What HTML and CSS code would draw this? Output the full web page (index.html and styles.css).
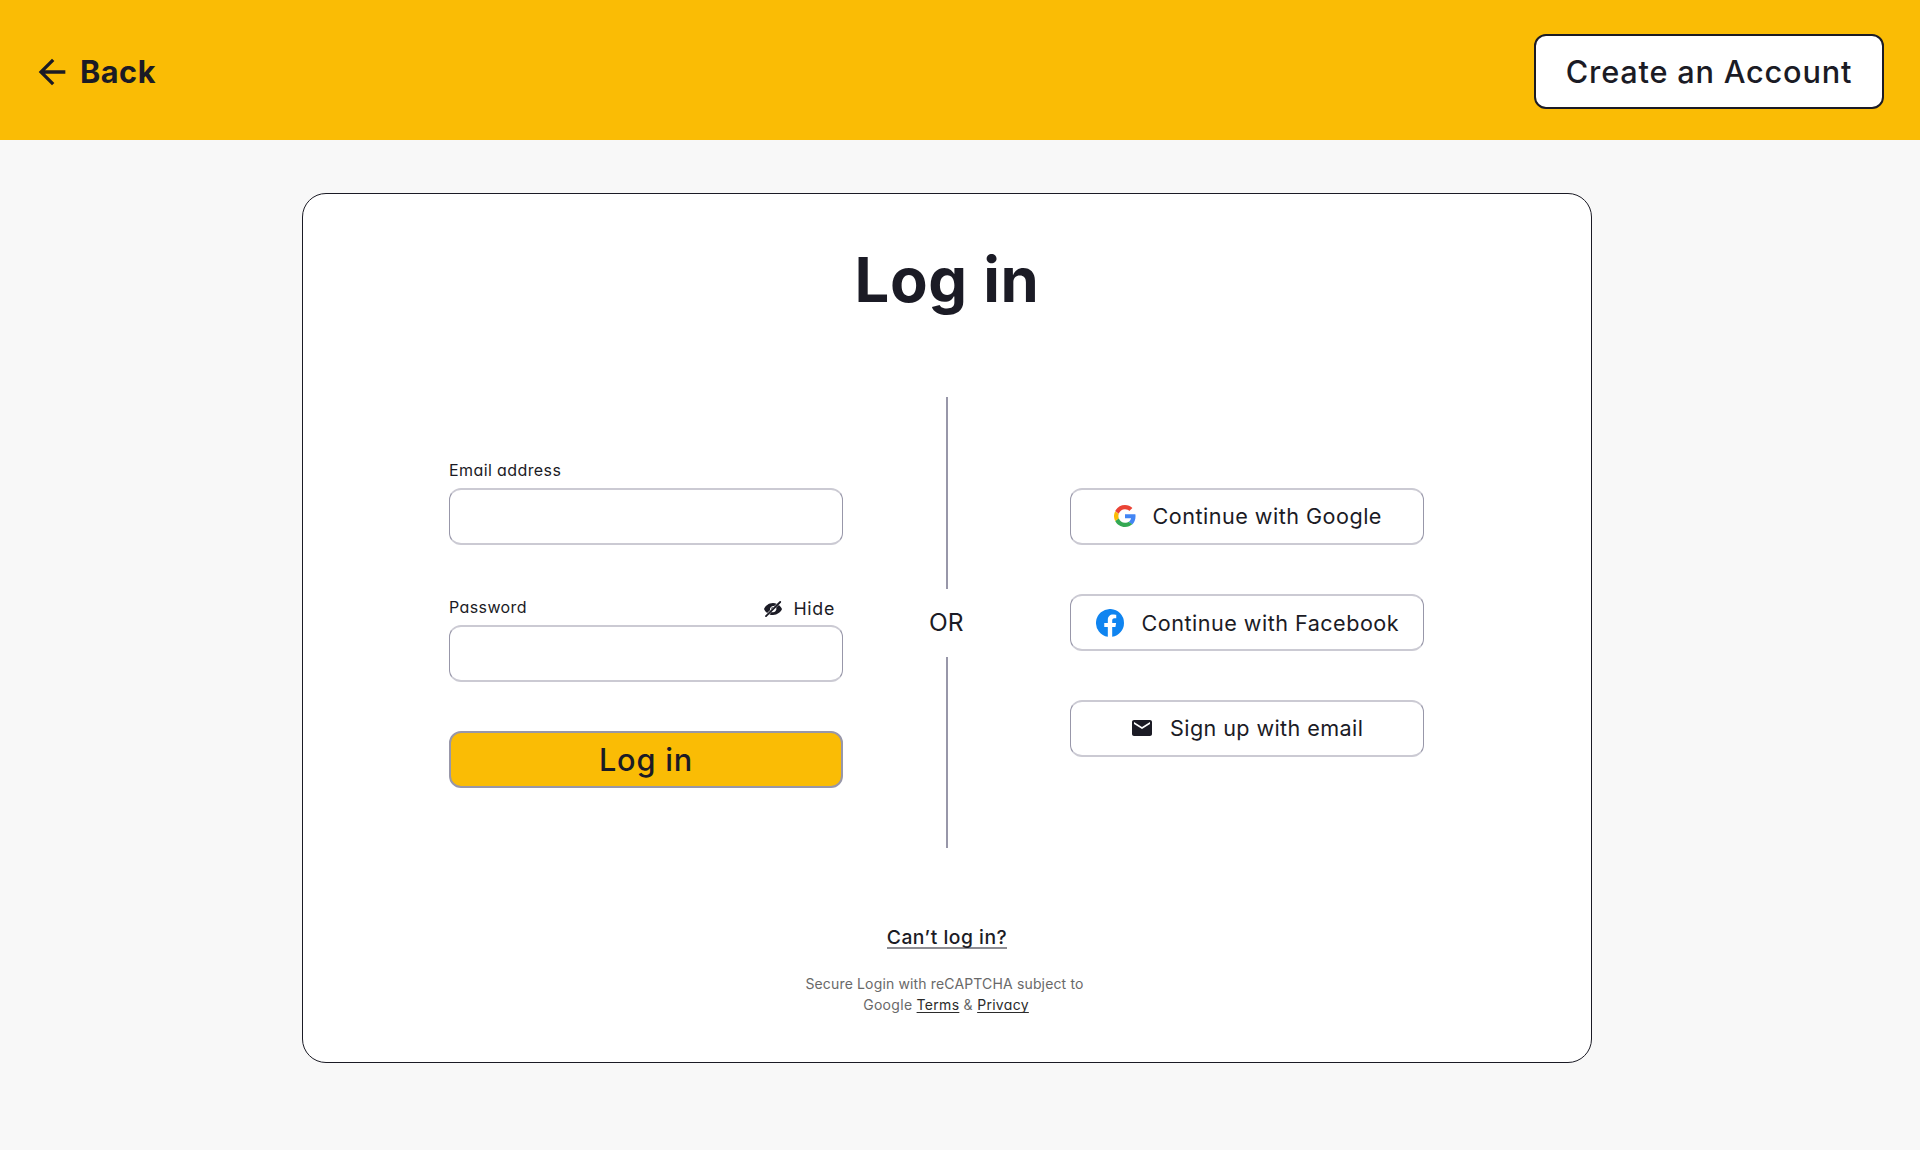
FILE: index.html
```html
<!DOCTYPE html>
<html lang="en">
<head>
<meta charset="utf-8">
<title>Log in</title>
<link rel="stylesheet" href="styles.css">
</head>
<body>
<header class="topbar">
  <a class="back" href="#">
    <svg class="back-icon" viewBox="0 0 24 24"><path d="M20 11H7.83l5.59-5.59L12 4l-8 8 8 8 1.41-1.41L7.83 13H20z"/></svg>
    <span>Back</span>
  </a>
  <a class="create-account" href="#">Create an Account</a>
</header>
<main class="card">
  <h1 class="title">Log in</h1>
  <div class="options">
    <form class="form">
      <div class="label-row"><label class="label" for="email">Email address</label></div>
      <input class="field" id="email" type="email">
      <div class="label-row label-row-second">
        <label class="label" for="password">Password</label>
        <button class="hide" type="button">
          <svg class="eye" viewBox="0 0 18 16"><path d="M12.6 2.7C11.5 2.2 10.300 2 9 2 4.600 2 1.200 5 0 8.100c.6 1.500 1.700 2.900 3.100 4l2.900-2.900A3.500 3.500 0 0 1 10.200 5.100zM7.100 8.200a2 2 0 0 1 2.100-2.100zM14.900 3.900 12.200 6.600A3.500 3.500 0 0 1 7.700 11.100L5.400 13.400c1.100.4 2.300.6 3.600.6 4.400 0 7.800-2.800 9-5.900-.6-1.500-1.700-3-3.100-4.200z"/><path class="slash" d="M2 15.200 16.200 1"/></svg>
          <span>Hide</span>
        </button>
      </div>
      <input class="field" id="password" type="password">
      <button class="submit" type="button">Log in</button>
    </form>
    <div class="divider">
      <span class="line"></span>
      <span class="or">OR</span>
      <span class="line"></span>
    </div>
    <div class="social">
      <button class="social-button google" type="button">
        <svg class="icon-google" viewBox="0 0 24 24"><path fill="#4285f4" d="M23.500 12.300c0-.9-.1-1.500-.2-2.200H12v4.400h6.600c-.2 1.100-.9 2.800-2.500 3.900l3.700 2.900c2.300-2.100 3.700-5.200 3.700-9z"/><path fill="#34a853" d="M12 24c3.200 0 6-1.100 7.900-2.900l-3.800-2.900c-1 .7-2.400 1.200-4.100 1.200-3.200 0-5.900-2.100-6.800-5l-3.900 3C3.200 21.300 7.300 24 12 24z"/><path fill="#fbbc05" d="M5.200 14.400a7.200 7.200 0 0 1 0-4.700l-3.900-3a12 12 0 0 0 0 10.700z"/><path fill="#ea4335" d="M12 4.700c2.300 0 3.800 1 4.700 1.800l3.400-3.300C18 1.200 15.200 0 12 0 7.300 0 3.200 2.700 1.300 6.600l3.900 3c1-2.900 3.600-4.900 6.800-4.900z"/></svg>
        <span>Continue with Google</span>
      </button>
      <button class="social-button facebook" type="button">
        <svg class="icon-facebook" viewBox="0 0 24 24"><path d="M24 12A12 12 0 1 0 10.130 23.850V15.470H7.080V12h3.050V9.360c0-3.010 1.790-4.670 4.530-4.670 1.310 0 2.690.23 2.690.23v2.950h-1.520c-1.490 0-1.950.93-1.950 1.870V12h3.330l-.53 3.470h-2.800v8.380A12 12 0 0 0 24 12z"/></svg>
        <span>Continue with Facebook</span>
      </button>
      <button class="social-button email" type="button">
        <svg class="icon-mail" viewBox="2 4 20 16"><path d="M20 4H4c-1.100 0-2 .9-2 2v12c0 1.100.9 2 2 2h16c1.100 0 2-.9 2-2V6c0-1.100-.9-2-2-2zm0 4-8 5-8-5V6l8 5 8-5z"/></svg>
        <span>Sign up with email</span>
      </button>
    </div>
  </div>
  <a class="help" href="#">Can’t log in?</a>
  <p class="legal"><span class="legal-line">Secure Login with reCAPTCHA subject to</span><br>Google <a href="#">Terms</a> &amp; <a href="#">Privacy</a></p>
</main>
</body>
</html>
```

FILE: styles.css
```css
* { box-sizing: border-box; }

body {
  margin: 0;
  min-height: 1150px;
  background: #f8f8f8;
  color: #1b1b25;
  font-family: Inter, "Liberation Sans", sans-serif;
}

a { color: inherit; text-decoration: none; }
button { color: inherit; font: inherit; cursor: pointer; }

.topbar {
  display: flex;
  align-items: center;
  justify-content: space-between;
  height: 140px;
  padding: 3px 36px 0 32px;
  background: #fabc05;
}

.back {
  display: flex;
  align-items: center;
  gap: 8px;
  font-size: 30.700px;
  font-weight: 700;
  letter-spacing: 0.500px;
  line-height: 40px;
}

.back-icon { width: 40px; height: 40px; fill: #1b1b25; }

.create-account {
  width: 350px;
  height: 75px;
  border: 2px solid #1b1b25;
  border-radius: 12px;
  background: #fff;
  font-size: 30.700px;
  font-weight: 500;
  letter-spacing: 0.800px;
  line-height: 72px;
  text-align: center;
}

.card {
  display: flex;
  flex-direction: column;
  align-items: center;
  width: 1290px;
  height: 870px;
  margin: 53px 0 0 302px;
  padding-top: 46px;
  border: 1px solid #1b1b25;
  border-radius: 24px;
  background: #fff;
}

.title {
  margin: 0;
  font-size: 61.500px;
  font-weight: 700;
  letter-spacing: 0.700px;
  line-height: 80px;
}

.options {
  display: flex;
  align-self: stretch;
  height: 451px;
  margin-top: 77px;
  padding-left: 146px;
}

.form {
  display: flex;
  flex-direction: column;
  width: 394px;
  padding-top: 61px;
}

.label-row {
  display: flex;
  align-items: center;
  justify-content: space-between;
  height: 24px;
  margin-bottom: 6px;
}

.label-row-second { margin-top: 50px; }

.label {
  font-size: 16px;
  font-feature-settings: "cv11";
  letter-spacing: 0.400px;
}

.hide {
  display: flex;
  align-items: center;
  gap: 11px;
  padding: 3px 8px 0 0;
  border: 0;
  background: none;
  font-size: 17.800px;
  letter-spacing: 0.700px;
  line-height: 24px;
}

.eye { width: 18px; height: 16px; fill: #1b1b25; }
.slash { fill: none; stroke: #1b1b25; stroke-width: 1.800; stroke-linecap: round; }

.field {
  width: 100%;
  height: 57px;
  padding: 0 16px;
  border: solid;
  border-width: 2px 1px;
  border-color: #cbcad3 #9897a9;
  border-radius: 12px;
  background: #fff;
  font: inherit;
}

.submit {
  height: 57px;
  margin-top: 49px;
  padding: 0;
  border: 2px solid #9897a9;
  border-radius: 12px;
  background: #fabc05;
  font-size: 30.700px;
  font-weight: 500;
  letter-spacing: 0.800px;
  line-height: 53px;
}

.divider {
  display: flex;
  flex-direction: column;
  align-items: center;
  width: 40px;
  margin: 0 103px 0 84px;
}

.line { flex: 1; width: 2px; background: #9897a9; }

.or {
  height: 68px;
  padding-right: 1.500px;
  font-size: 24.500px;
  font-weight: 400;
  line-height: 67px;
}

.social {
  display: flex;
  flex-direction: column;
  gap: 49px;
  width: 354px;
  padding-top: 91px;
}

.social-button {
  display: flex;
  align-items: center;
  height: 57px;
  padding: 0 0 1px;
  border: solid;
  border-width: 2px 1px;
  border-color: #cbcad3 #9897a9;
  border-radius: 12px;
  background: #fff;
  font-size: 21.600px;
  letter-spacing: 0.480px;
  line-height: 30px;
  white-space: nowrap;
}

.google { gap: 16.500px; padding-left: 43px; }
.facebook { gap: 17.500px; padding: 0 0 0 25px; }
.email { gap: 18px; padding-left: 61px; letter-spacing: 0.400px; }

.icon-google { width: 22px; height: 22px; }
.icon-facebook { width: 28px; height: 28px; fill: #0f84f0; }
.icon-mail { width: 20px; height: 16px; fill: #1b1b25; }

.help {
  margin-top: 78px;
  border-bottom: 2px solid #8d8d93;
  font-size: 19.300px;
  font-weight: 500;
  letter-spacing: 0.520px;
  line-height: 22px;
  height: 23px;
}

.legal {
  margin: 24px 2px 0 0;
  color: #696969;
  font-size: 14px;
  font-feature-settings: "cv11";
  letter-spacing: 0.300px;
  line-height: 21px;
  text-align: center;
}

.legal-line { margin-right: 3px; letter-spacing: 0.150px; }

.legal a {
  color: #2b2b2b;
  text-decoration: underline;
  text-decoration-thickness: 1px;
  text-decoration-skip-ink: none;
  text-underline-offset: 2px;
}
```
